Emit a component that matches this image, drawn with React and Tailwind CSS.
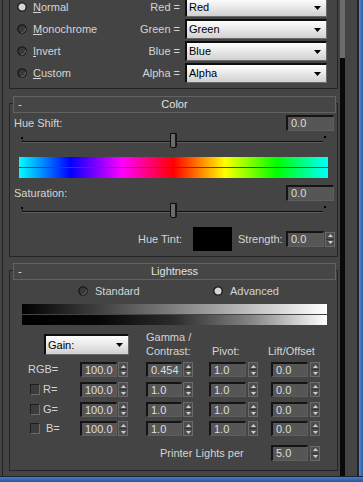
import React from "react";

const hue =
  "h-[10px] bg-[linear-gradient(to_right,#00ffff,#0000ff,#ff00ff,#ff0000,#ffff00,#00ff00,#00ffff)]";

function Spin() {
  return (
    <div className="w-[10px] h-[15px] shrink-0 flex flex-col border border-[#6a6a6a] bg-[#4e4e4e]">
      <div className="flex-1 flex items-center justify-center border-b border-[#333]">
        <svg width="5" height="3">
          <path d="M2.5 0 L5 3 L0 3 Z" fill="#cfcfcf" />
        </svg>
      </div>
      <div className="flex-1 flex items-center justify-center">
        <svg width="5" height="3">
          <path d="M0 0 L5 0 L2.5 3 Z" fill="#cfcfcf" />
        </svg>
      </div>
    </div>
  );
}

function Field({ value, className }) {
  return (
    <div
      className={`${className} shrink-0 flex items-center pl-[3px] leading-none bg-[#565656] text-[#dedede] border-t-2 border-l-2 border-b border-r border-[#141414] border-b-[#5e5e5e] border-r-[#5e5e5e]`}
    >
      {value}
    </div>
  );
}

function Drop({ label, className }) {
  return (
    <div
      className={`${className} shrink-0 flex items-center justify-between pl-[2px] pr-[5px] text-black border-t-2 border-l-2 border-b border-r border-[#0e0e0e] border-b-[#6a6a6a] border-r-[#6a6a6a] bg-[linear-gradient(to_bottom,#fdfdfd,#e8e8e8_50%,#d0d0d0)]`}
    >
      <span>{label}</span>
      <svg width="7" height="4">
        <path d="M0 0H7L3.5 4Z" fill="#000" />
      </svg>
    </div>
  );
}

function Radio({ on }) {
  return (
    <svg width="10" height="10" viewBox="0 0 10 10" className="shrink-0">
      <circle cx="5" cy="5" r="4.2" fill={on ? "#d6d6d6" : "#393939"} stroke="#1a1a1a" strokeWidth="1.3" />
      {!on && <path d="M8.3 4 A3.6 3.6 0 0 1 4 8.4" stroke="#6a6a6a" fill="none" strokeWidth="1" />}
    </svg>
  );
}

function Check() {
  return (
    <div className="w-[10px] h-[11px] shrink-0 bg-[#3c3c3c] border border-[#1f1f1f] border-b-[#6a6a6a] border-r-[#6a6a6a]" />
  );
}

function Slider() {
  return (
    <svg width="306" height="16" className="block ml-[10px] mt-[2px]">
      <rect x="1" y="4" width="2" height="2" fill="#000" />
      <rect x="304" y="3" width="2" height="2" fill="#000" />
      <rect x="2" y="7" width="1" height="3" fill="#101010" />
      <rect x="2" y="8" width="301" height="1" fill="#101010" />
      <rect x="2" y="9" width="301" height="1" fill="#5c5c5c" />
      <path d="M150.5 0.5 H156.5 V13 Q156.5 14.5 155 14.5 H152 Q150.5 14.5 150.5 13 Z" fill="#6b6b6b" stroke="#0c0c0c" />
      <rect x="155" y="1" width="1.5" height="13" fill="#1a1a1a" />
    </svg>
  );
}

function Header({ title }) {
  return (
    <div className="relative ml-[4px] mr-[2px] h-[17px] border border-[#626262] bg-[#464646] grid grid-cols-[20px_1fr_20px] items-center text-[#e2e2e2] leading-none">
      <span className="pl-[4px]">-</span>
      <span className="text-center">{title}</span>
      <span />
    </div>
  );
}

function ChannelRow({ label, left, right }) {
  return (
    <div className="h-[22px] flex items-center">
      <div className="pl-[7px] w-[103px] flex items-center">
        <Radio on={left.on} />
        <span className="ml-[6px]">
          <u className="underline">{left.text[0]}</u>
          {left.text.slice(1)}
        </span>
      </div>
      <div className="w-[67px] text-right">{label}</div>
      <Drop label={right} className="ml-[5px] w-[142px] h-[20px]" />
    </div>
  );
}

function DataRow({ lead, vals, className }) {
  return (
    <div className={`${className} h-[15px] flex items-center`}>
      <div className="w-[70px] flex items-center">{lead}</div>
      <Field value={vals[0]} className="w-[37px] h-[15px]" />
      <div className="ml-[1px]"><Spin /></div>
      <Field value={vals[1]} className="ml-[18px] w-[36px] h-[15px]" />
      <div className="ml-[1px]"><Spin /></div>
      <Field value={vals[2]} className="ml-[16px] w-[37px] h-[15px]" />
      <div className="ml-[2px]"><Spin /></div>
      <Field value={vals[3]} className="ml-[13px] w-[37px] h-[15px]" />
      <div className="ml-[2px]"><Spin /></div>
    </div>
  );
}

export default function App() {
  return (
    <div className="w-[363px] h-[482px] overflow-hidden bg-[#444444] flex flex-col text-[11px] text-[#d4d4d4] [font-family:'Liberation_Sans',Arial,sans-serif]">
      <div className="h-[476px] flex">
        <div className="w-[2px]" />
        <div className="w-px bg-[#222]" />
        <div className="w-[6px]" />

        {/* rollouts */}
        <div className="w-[329px] flex flex-col">
          {/* channel rollout (cut off at top) */}
          <div className="h-[89px] overflow-hidden border-x border-b border-[#242424]">
            <div className="-mt-[4px] flex flex-col">
              <ChannelRow label="Red =" right="Red" left={{ on: true, text: "Normal" }} />
              <ChannelRow label="Green =" right="Green" left={{ on: false, text: "Monochrome" }} />
              <ChannelRow label="Blue =" right="Blue" left={{ on: false, text: "Invert" }} />
              <ChannelRow label="Alpha =" right="Alpha" left={{ on: false, text: "Custom" }} />
            </div>
          </div>

          {/* Color */}
          <div className="mt-[7px] flex flex-col">
            <Header title="Color" />
            <div className="-mt-[10px] border border-[#242424] pt-[11px] pb-[5px] flex flex-col">
              <div className="h-[16px] flex items-center justify-between pl-[4px] pr-[3px]">
                <span>Hue Shift:</span>
                <Field value="0.0" className="w-[48px] h-[16px]" />
              </div>
              <Slider />
              <div className="mt-[8px] ml-[9px] w-[309px] flex flex-col gap-px">
                <div className={hue} />
                <div className={hue} />
              </div>
              <div className="mt-[7px] h-[16px] flex items-center justify-between pl-[4px] pr-[3px]">
                <span>Saturation:</span>
                <Field value="0.0" className="w-[48px] h-[16px]" />
              </div>
              <Slider />
              <div className="mt-[8px] h-[24px] flex items-center">
                <div className="w-[172px] text-right">Hue Tint:</div>
                <div className="ml-[11px] w-[39px] h-[24px] bg-black" />
                <div className="ml-[6px] w-[48px]">Strength:</div>
                <Field value="0.0" className="w-[38px] h-[16px]" />
                <div className="ml-px"><Spin /></div>
              </div>
            </div>
          </div>

          {/* Lightness */}
          <div className="mt-[6px] flex flex-col">
            <Header title="Lightness" />
            <div className="-mt-[10px] border border-[#242424] pt-[13px] pb-[9px] flex flex-col">
              <div className="h-[14px] flex items-center pl-[68px]">
                <div className="w-[135px] flex items-center">
                  <Radio on={false} />
                  <span className="ml-[7px]">Standard</span>
                </div>
                <Radio on={true} />
                <span className="ml-[7px]">Advanced</span>
              </div>
              <div className="mt-[6px] ml-[12px] w-[305px] flex flex-col gap-px">
                <div className="h-[10px] bg-[linear-gradient(to_right,#000,#fff)]" />
                <div className="h-[10px] bg-[linear-gradient(to_right,#000,#060606_25%,#2c2c2c_50%,#858585_75%,#fff)]" />
              </div>
              <div className="mt-[5px] h-[28px] flex items-start leading-[14px]">
                <Drop label="Gain:" className="ml-[34px] mt-[4px] w-[85px] h-[21px]" />
                <div className="ml-[17px] w-[66px]">
                  <div>Gamma /</div>
                  <div>Contrast:</div>
                </div>
                <div className="w-[56px] pt-[14px]">Pivot:</div>
                <div className="pt-[14px]">Lift/Offset</div>
              </div>
              <DataRow
                className="mt-[4px]"
                lead={<span className="pl-[18px]">RGB=</span>}
                vals={["100.0", "0.454", "1.0", "0.0"]}
              />
              <DataRow
                className="mt-[5px]"
                lead={<div className="pl-[20px] flex items-center"><Check /><span className="ml-[3px]">R=</span></div>}
                vals={["100.0", "1.0", "1.0", "0.0"]}
              />
              <DataRow
                className="mt-[5px]"
                lead={<div className="pl-[20px] flex items-center"><Check /><span className="ml-[3px]">G=</span></div>}
                vals={["100.0", "1.0", "1.0", "0.0"]}
              />
              <DataRow
                className="mt-[4px]"
                lead={<div className="pl-[20px] flex items-center"><Check /><span className="ml-[6px]">B=</span></div>}
                vals={["100.0", "1.0", "1.0", "0.0"]}
              />
              <div className="mt-[9px] h-[16px] flex items-center">
                <div className="w-[261px] pl-[150px]">Printer Lights per</div>
                <Field value="5.0" className="w-[37px] h-[16px]" />
                <div className="ml-[2px]"><Spin /></div>
              </div>
            </div>
          </div>
        </div>

        <div className="w-[2px]" />
        {/* scrollbar */}
        <div className="w-[5px] flex flex-col">
          <div className="h-[58px] bg-[#6c6c6c]" />
          <div className="flex-1 bg-[#0a0a0a]" />
        </div>
        <div className="w-[12px]" />
        <div className="w-[2px] bg-[#1b2433]" />
        <div className="w-[4px] bg-[linear-gradient(to_right,#5b8ad0,#2d5ca3)]" />
      </div>
      <div className="h-px bg-[#1b2433]" />
      <div className="h-[5px] bg-[linear-gradient(to_bottom,#4a7cc4,#2a5599)]" />
    </div>
  );
}
